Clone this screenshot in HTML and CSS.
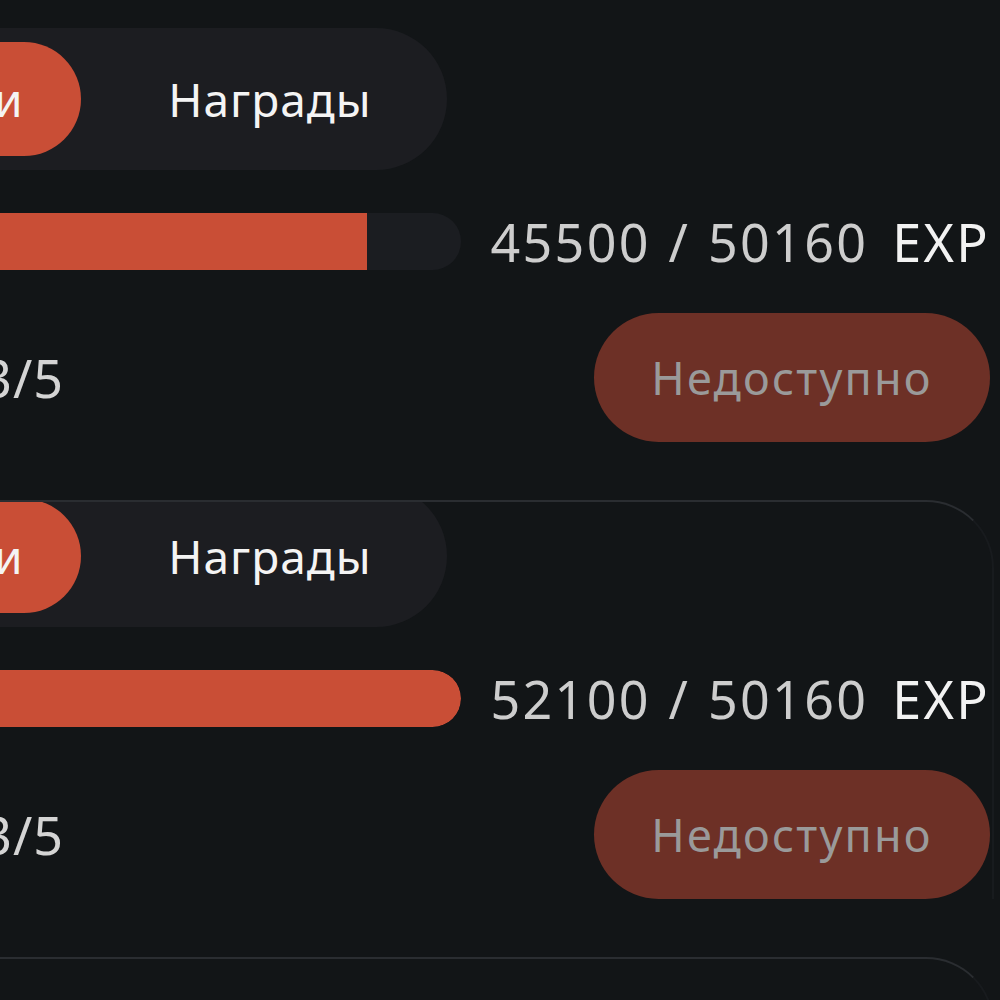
FILE: index.html
```html
<!DOCTYPE html>
<html lang="ru">

<head>
    <meta charset="UTF-8">
    <meta name="viewport" content="width=device-width, initial-scale=1.0">
    <title>Боевой пропуск</title>
    <link rel="stylesheet" href="styles.css">
</head>

<body>
    <section class="level-list">
        <div class="level-card open">
            <div class="tabs">
                <button class="tab active">Задачи</button>
                <button class="tab">Награды</button>
            </div>
            <div class="progress-row">
                <div class="track">
                    <div class="fill" style="width: 86.2%;"></div>
                </div>
                <p class="exp"><span class="exp-value">45500 / 50160</span><span class="exp-unit">EXP</span></p>
            </div>
            <div class="claim-row">
                <p class="count">Выполнено 3/5</p>
                <button class="claim-btn" disabled>Недоступно</button>
            </div>
        </div>

        <div class="level-card">
            <div class="tabs">
                <button class="tab active">Задачи</button>
                <button class="tab">Награды</button>
            </div>
            <div class="progress-row">
                <div class="track">
                    <div class="fill full" style="width: 100%;"></div>
                </div>
                <p class="exp"><span class="exp-value">52100 / 50160</span><span class="exp-unit">EXP</span></p>
            </div>
            <div class="claim-row">
                <p class="count">Выполнено 3/5</p>
                <button class="claim-btn" disabled>Недоступно</button>
            </div>
        </div>

        <div class="level-card closed">
            <p class="level-title">Уровень 3</p>
        </div>
    </section>
</body>

</html>
```

FILE: styles.css
```css
html,
body {
    margin: 0;
    padding: 0;
    background: #121517;
    overflow: hidden;
    font-family: 'Noto Sans', 'DejaVu Sans', sans-serif;
}

.level-list {
    width: 1294px;
    margin-left: -300px;
    padding-top: 43px;
}

.level-card {
    margin-bottom: 58px;
    padding: 0 2px 0 85px;
    border-top: 2px solid #2a2d31;
    border-right: 2px solid #181b1e;
    border-top-right-radius: 68px;
    overflow: hidden;
}

/* первая карточка раскрыта, верхняя кромка не видна */
.level-card.open {
    border-color: transparent;
    overflow: visible;
}

.level-card.closed {
    padding-top: 80px;
}

.level-title {
    margin: 0;
    color: #f4f4f4;
    font-size: 46px;
}

.tabs {
    display: inline-flex;
    gap: 24px;
    margin-top: -17px;
    padding: 14px 12px 14px 14px;
    background: #1c1d21;
    border-radius: 71px;
}

.tab {
    height: 114px;
    width: 330px;
    border: none;
    border-radius: 57px;
    background: transparent;
    color: #f4f4f4;
    font-family: inherit;
    font-size: 46px;
    letter-spacing: 1px;
}

.tab.active {
    width: 282px;
    background: #c94e36;
}

.progress-row {
    display: flex;
    align-items: center;
    gap: 30px;
    margin-top: 43px;
}

.track {
    flex: 1;
    height: 57px;
    background: #1b1d21;
    border-radius: 29px;
    overflow: hidden;
}

.fill {
    height: 100%;
    background: #c94e36;
}

.fill.full {
    border-radius: 29px;
}

.exp {
    margin: 0;
    font-size: 52px;
    line-height: 57px;
    letter-spacing: 2.3px;
    white-space: nowrap;
}

.exp-value {
    color: #cdcdcd;
    word-spacing: 2px;
}

.exp-unit {
    margin-left: 24px;
    color: #f2f2f2;
}

.claim-row {
    display: flex;
    align-items: center;
    justify-content: space-between;
    margin-top: 43px;
}

/* длинная подпись уходит влево за край, видна только концовка */
.count {
    display: flex;
    justify-content: flex-end;
    width: 279px;
    margin: 0;
    color: #d4d4d4;
    font-size: 52px;
    letter-spacing: 1px;
    white-space: nowrap;
}

.claim-btn {
    width: 396px;
    height: 129px;
    border: none;
    border-radius: 65px;
    background: #6d3026;
    color: #9a9a9a;
    font-family: inherit;
    font-size: 45px;
    letter-spacing: 2.2px;
}
```
